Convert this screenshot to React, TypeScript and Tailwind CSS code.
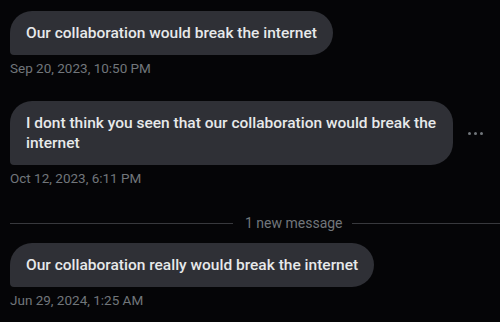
import React from "react";

function Bubble({ children }: { children: React.ReactNode }) {
  return (
    <div className="rounded-[22px] rounded-bl-[4px] bg-[#2f3036] px-4 py-[12px] text-[15.5px] font-medium leading-[20px] text-[#e7e9ea]">
      {children}
    </div>
  );
}

function Stamp({ children }: { children: React.ReactNode }) {
  return <div className="mt-[5px] text-[13.5px] leading-[16px] text-[#71767b]">{children}</div>;
}

export default function App() {
  return (
    <div
      className="w-[500px] h-[322px] overflow-hidden bg-[#050507] pl-[10px] pt-[11px]"
      style={{ fontFamily: "Roboto, 'Liberation Sans', sans-serif" }}
    >
      <div className="flex flex-col items-start">
        <Bubble>Our collaboration would break the internet</Bubble>
        <Stamp>Sep 20, 2023, 10:50 PM</Stamp>
      </div>

      <div className="mt-[25px] flex flex-col items-start">
        <div className="flex items-center w-full">
          <div className="w-[443px]">
            <Bubble>I dont think you seen that our collaboration would break the internet</Bubble>
          </div>
          <div className="ml-[15px] flex gap-[3px]">
            <span className="block h-[3px] w-[3px] rounded-full bg-[#71767b]" />
            <span className="block h-[3px] w-[3px] rounded-full bg-[#71767b]" />
            <span className="block h-[3px] w-[3px] rounded-full bg-[#71767b]" />
          </div>
        </div>
        <Stamp>Oct 12, 2023, 6:11 PM</Stamp>
      </div>

      <div className="mt-[28px] flex items-center">
        <div className="h-px w-[223px] bg-[#38393d]" />
        <div className="pl-[12px] pr-[9px] text-[14px] leading-[18px] text-[#71767b]">1 new message</div>
        <div className="h-px flex-1 bg-[#38393d]" />
      </div>

      <div className="mt-[11px] flex flex-col items-start">
        <Bubble>Our collaboration really would break the internet</Bubble>
        <Stamp>Jun 29, 2024, 1:25 AM</Stamp>
      </div>
    </div>
  );
}
